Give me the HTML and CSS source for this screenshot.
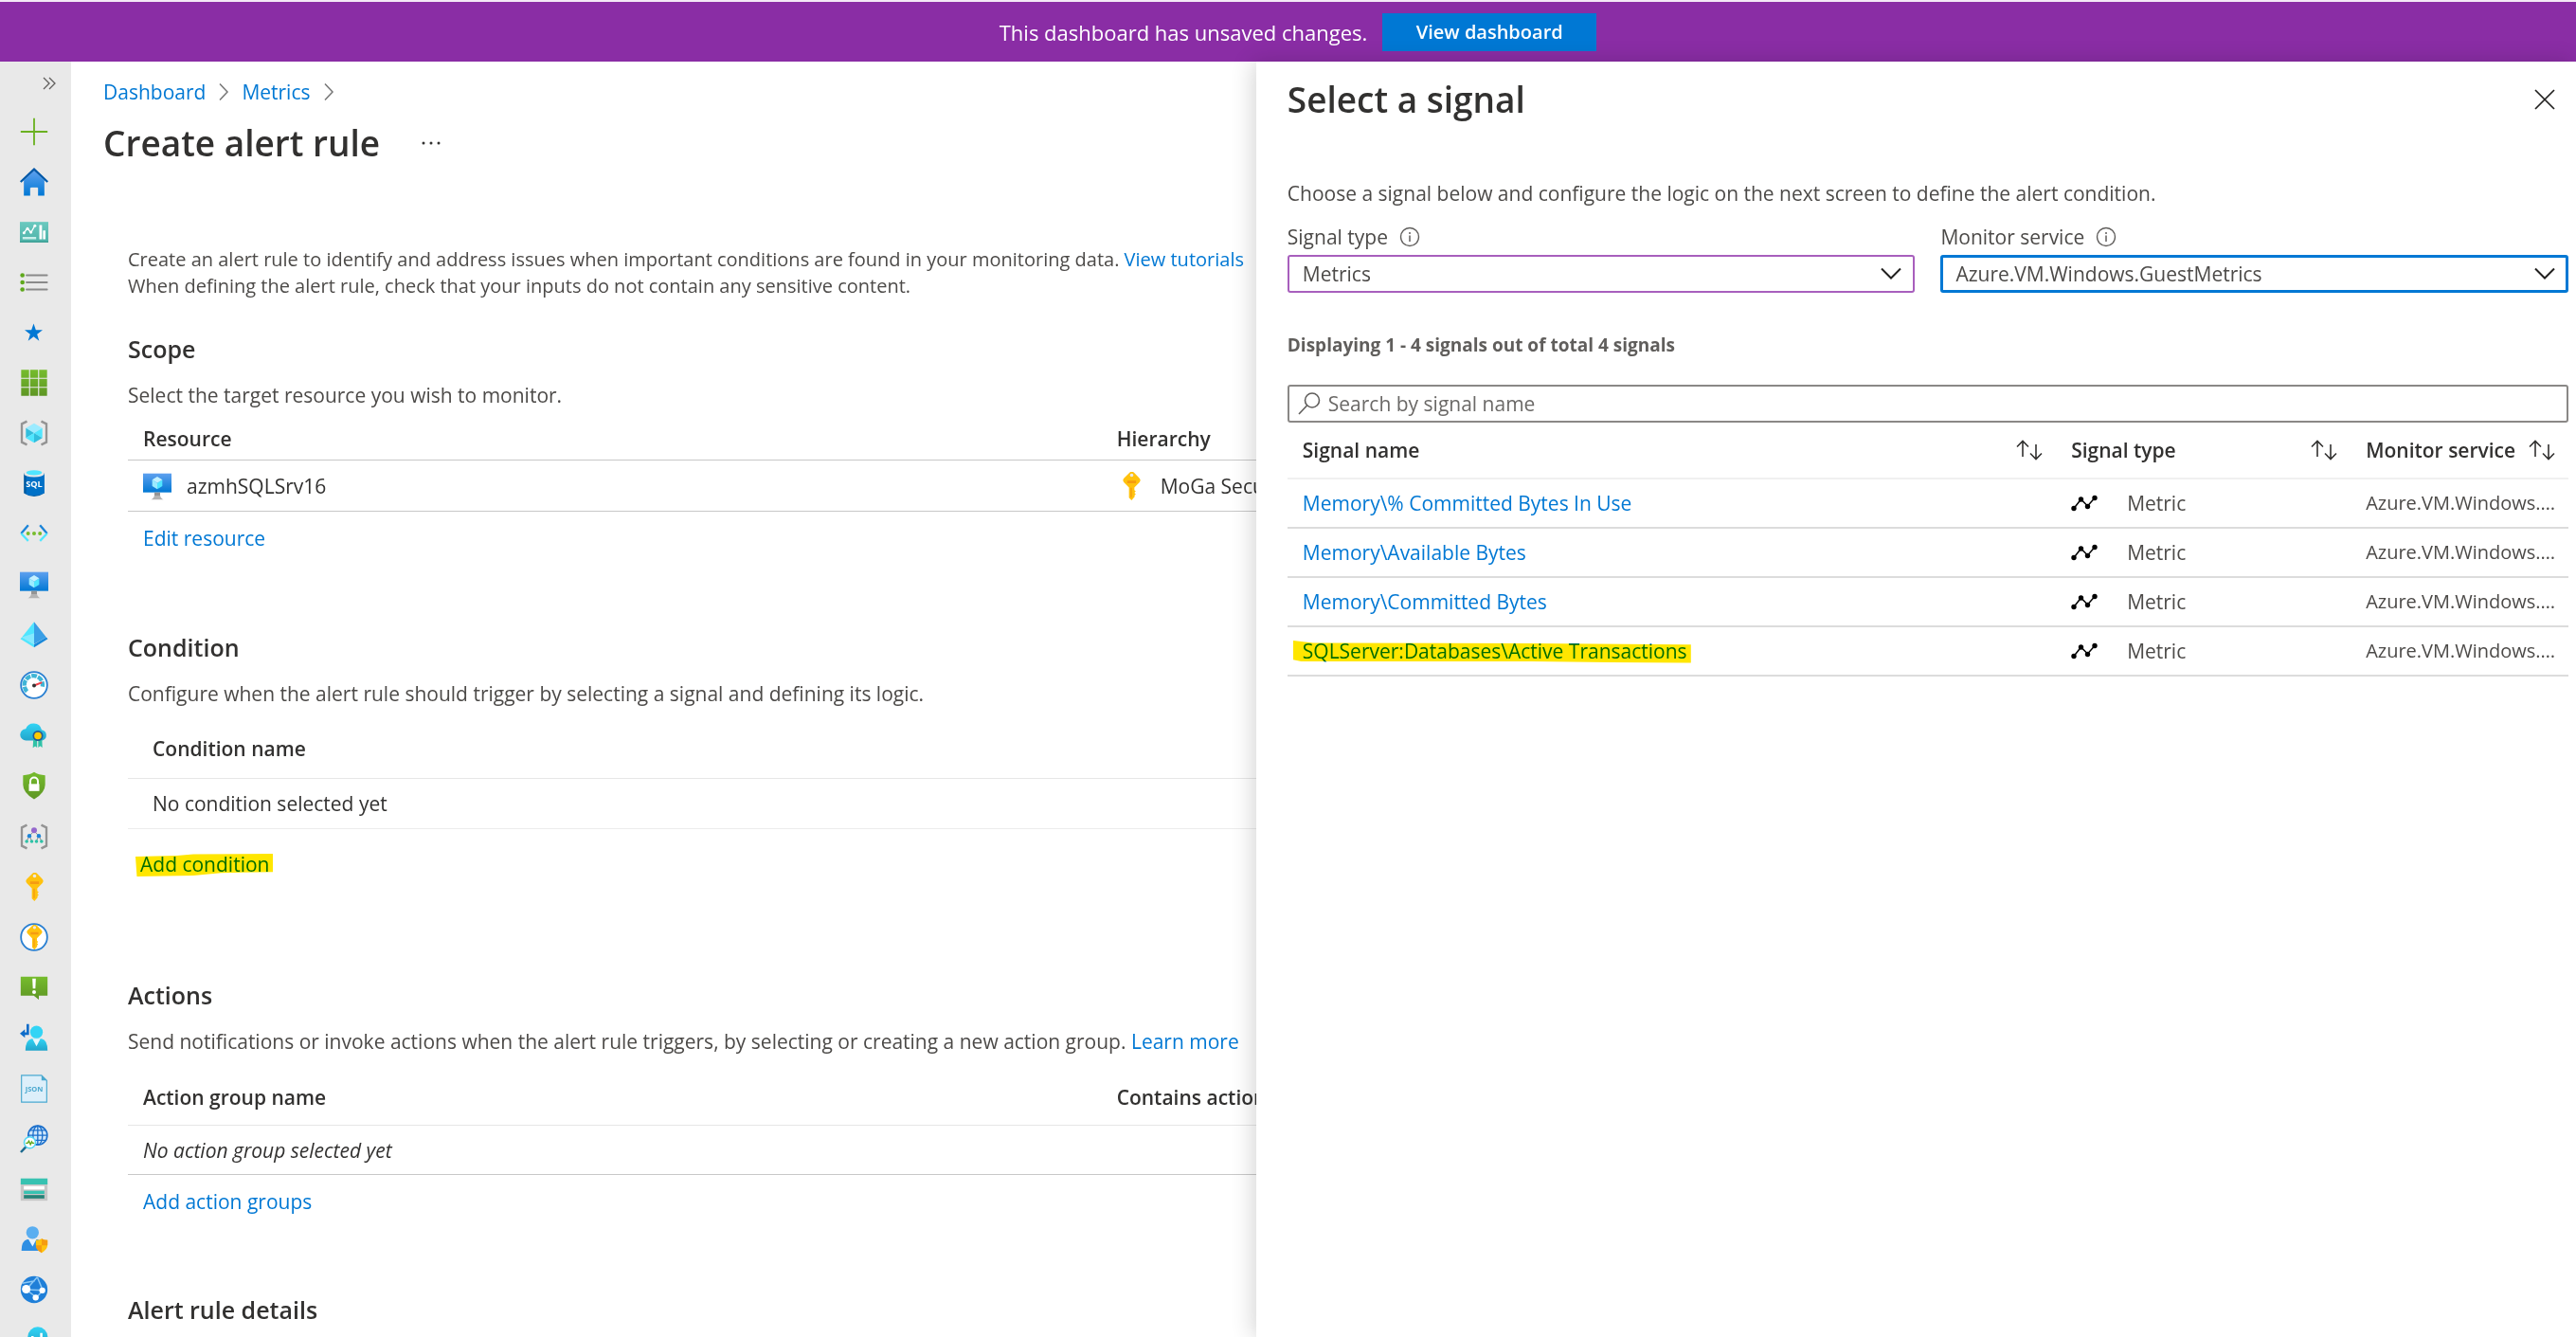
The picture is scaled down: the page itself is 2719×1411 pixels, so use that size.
FILE: index.html
```html
<!DOCTYPE html>
<html lang="en">
<head>
<meta charset="utf-8">
<title>Create alert rule</title>
<link rel="stylesheet" href="styles.css">
</head>
<body>
<svg class="defs" width="0" height="0" aria-hidden="true">
  <defs>
    <linearGradient id="blue" x1="0" y1="0" x2="0" y2="1"><stop offset="0" stop-color="#5ea0ef"/><stop offset="1" stop-color="#0078d4"/></linearGradient>
    <linearGradient id="green" x1="0" y1="0" x2="0" y2="1"><stop offset="0" stop-color="#76bc2d"/><stop offset="1" stop-color="#5e9624"/></linearGradient>
    <linearGradient id="teal" x1="0" y1="0" x2="0" y2="1"><stop offset="0" stop-color="#6bc9bf"/><stop offset="1" stop-color="#4fb3a9"/></linearGradient>
    <linearGradient id="cyan" x1="0" y1="0" x2="0" y2="1"><stop offset="0" stop-color="#32d4f5"/><stop offset="1" stop-color="#22a5cb"/></linearGradient>
    <symbol id="i-vm" viewBox="0 0 18 18">
      <path fill="url(#blue)" d="M0 1h18v12H0z"/>
      <path fill="#50e6ff" d="M12.200 5v4L9 10.900V7z"/><path fill="#c3f1ff" d="M12.200 5 9 7 5.800 5 9 3z"/><path fill="#9cebff" d="M9 7v3.900L5.800 9V5z"/>
      <path fill="#949494" d="M7.200 13h3.600v3H7.200z"/><path fill="#b3b3b3" d="M5 17.500q1.500-.3 2.200-2.500h3.600q.7 2.200 2.200 2.500z"/>
    </symbol>
    <symbol id="i-key" viewBox="0 0 18 18">
      <path fill="#ffc20e" d="M8 .5a2 2 0 0 1 2.800 0l3.300 3.400a2 2 0 0 1 0 2.800L11 9.900v1.600l.9.800-.9.900.9.900-.9.900.3.600L9.200 18 7.600 16.300V9.900L4.500 6.700a2 2 0 0 1 0-2.800z"/>
      <path fill="#e9e9e9" d="M9.300 1a1.100 1.100 0 1 1 0 2.200 1.100 1.100 0 0 1 0-2.200z"/>
      <path fill="#f59b11" d="M6.500 5.500h5.600v1.700H6.500zM8.600 10h.8v6h-.8z"/>
    </symbol>
    <symbol id="i-sort" viewBox="0 0 28 24"><path fill="none" stroke="#323130" stroke-width="1.600" d="M7 19V3M1 8.500 7 2.500l6 6M21 6v15M15 15.500l6 6 6-6"/></symbol>
    <symbol id="i-metric" viewBox="0 0 28 18"><path fill="none" stroke="#000" stroke-width="1.500" d="M3 14.500 10.500 5l7 7L25 3.500"/><g fill="#000"><circle cx="3" cy="14.500" r="2.700"/><circle cx="10.500" cy="5" r="2.700"/><circle cx="17.500" cy="12.500" r="2.700"/><circle cx="25" cy="3.500" r="2.700"/></g></symbol>
    <symbol id="i-info" viewBox="0 0 22 22"><circle cx="11" cy="11" r="9.500" fill="none" stroke="#605e5c" stroke-width="1.400"/><path stroke="#605e5c" stroke-width="1.500" d="M11 9.500V16M11 6v2"/></symbol>
    <symbol id="i-down" viewBox="0 0 22 14"><path fill="none" stroke="#201f1e" stroke-width="2" d="m1 1.500 10 10 10-10"/></symbol>
    <symbol id="i-crumb" viewBox="0 0 12 20"><path fill="none" stroke="#767676" stroke-width="1.500" d="m2 1.500 8 8.500-8 8.500"/></symbol>
  </defs>
</svg>

<div class="app">
  <header class="banner">
    <span>This dashboard has unsaved changes.</span>
    <button class="banner-button" type="button">View dashboard</button>
  </header>

  <div class="shell">
    <nav class="rail" aria-label="Favorites">
      <button class="rail-toggle" type="button" aria-label="Expand menu">
        <svg width="14" height="14" viewBox="0 0 14 14"><path fill="none" stroke="#605e5c" stroke-width="1.300" d="m1 1 6 6-6 6M7 1l6 6-6 6"/></svg>
      </button>
      <ul class="rail-list">
        <li><a href="#" aria-label="Create a resource"><svg viewBox="0 0 18 18"><path stroke="#6bb121" stroke-width="1.100" d="M9 .5v17M.5 9h17"/></svg></a></li>
        <li><a href="#" aria-label="Home"><svg viewBox="0 0 18 18"><path fill="url(#blue)" d="M2.500 8 9 1.800 15.500 8v9.700h-4v-5h-5v5h-4z"/><path fill="#eaeaea" d="M7 12.500h4.200v5H7z"/><path fill="#0058a8" d="M9 0 0 8.500l.9 1L9 2l8.100 7.500.9-1z"/></svg></a></li>
        <li><a href="#" aria-label="Dashboard"><svg viewBox="0 0 18 18"><path fill="url(#teal)" d="M0 2.500h18v13H0z"/><path fill="#3a9c92" d="M0 14.700h18v.8H0z"/><path fill="none" stroke="#fff" stroke-width=".8" d="m2.500 9.500 2.300-3 2.200 2.800 2.500-4.500"/><g fill="#fff"><circle cx="2.600" cy="9.400" r=".9"/><circle cx="4.800" cy="6.700" r=".9"/><circle cx="7" cy="9" r=".9"/><circle cx="9.500" cy="5" r=".9"/><path d="M12.300 4.500H14v9h-1.700zM14.600 8h1.600v5.500h-1.600z"/></g><path fill="#c9efea" d="M1.700 12h8.600v1.500H1.700z"/></svg></a></li>
        <li><a href="#" aria-label="All services"><svg viewBox="0 0 18 18"><path stroke="#8a8a8a" stroke-width="1.100" stroke-linecap="round" d="M4.200 4.500h13M4.200 9h13M4.200 13.500h13"/><g fill="#5fa81c"><circle cx="1.600" cy="4.500" r="1.400"/><circle cx="1.600" cy="9" r="1.400"/><circle cx="1.600" cy="13.500" r="1.400"/></g></svg></a></li>
      </ul>
      <ul class="rail-list">
        <li><a href="#" aria-label="Favorites"><svg viewBox="0 0 18 18"><path fill="#0078d4" d="m8.700 3.300 1.400 4.100h4.300l-3.500 2.600 1.300 4.200-3.500-2.600-3.500 2.600L6.500 10 3 7.400h4.300z"/></svg></a></li>
        <li><a href="#" aria-label="All resources"><svg viewBox="0 0 18 18"><path fill="url(#green)" d="M.8.800h5v5h-5zm5.700 0h5v5h-5zm5.700 0h5v5h-5zM.8 6.500h5v5h-5zm5.700 0h5v5h-5zm5.700 0h5v5h-5zM.8 12.200h5v5h-5zm5.700 0h5v5h-5zm5.700 0h5v5h-5z"/></svg></a></li>
        <li><a href="#" aria-label="Resource groups"><svg viewBox="0 0 18 18"><path fill="none" stroke="#949494" stroke-width="1.400" d="M4.500 1.600 1.200 3.200v11.600l3.300 1.600M13.500 1.600l3.300 1.600v11.600l-3.300 1.600"/><path fill="#9cebff" d="m9 2.800 5.200 3.100L9 9 3.800 5.900z"/><path fill="#32bedd" d="m9 9-5.200 3.100V5.900z"/><path fill="#50e6ff" d="m9 9 5.200-3.100v6.200z"/><path fill="#32bedd" d="m9 9 5.200 3.100L9 15.200z"/><path fill="#50e6ff" d="m9 9-5.200 3.100L9 15.200z"/></svg></a></li>
        <li><a href="#" aria-label="SQL databases"><svg viewBox="0 0 18 18"><path fill="#005ba1" d="M2.500 2.500h13v12.800Q9 19.500 2.500 15.300z"/><path fill="#0078d4" d="M4 3h11.500v12.300Q9 18 4 16z" opacity=".75"/><ellipse cx="9" cy="2.800" rx="6.500" ry="2.300" fill="#e8e8e8"/><ellipse cx="9" cy="2.300" rx="5" ry="1.600" fill="#50e6ff"/><text class="icon-text" x="9" y="11.500" font-size="5.500" fill="#fff" text-anchor="middle">SQL</text></svg></a></li>
        <li><a href="#" aria-label="Virtual networks"><svg viewBox="0 0 18 18"><path fill="none" stroke="#1b84d8" stroke-width="1.400" d="M5.300 3.800.8 9M12.700 3.800 17.200 9"/><path fill="none" stroke="#50e6ff" stroke-width="1.400" d="M.8 9l4.500 4.700M17.200 9l-4.500 4.700"/><g fill="#76bc2d"><circle cx="5.200" cy="9" r="1.200"/><circle cx="9" cy="9" r="1.200"/><circle cx="12.700" cy="9" r="1.200"/></g></svg></a></li>
        <li><a href="#" aria-label="Virtual machines"><svg><use href="#i-vm"/></svg></a></li>
        <li><a href="#" aria-label="Azure Active Directory"><svg viewBox="0 0 18 18"><path fill="#50e6ff" d="m.3 11.500 1-1L9 15v2z"/><path fill="#1988d9" d="m17.700 11.500-1-1L9 15v2z"/><path fill="#50e6ff" d="M9 .8v14L1.300 10.500z"/><path fill="#3a9fe6" d="M9 .8v14l7.700-4.300z"/><path fill="#9cebff" d="M9 8v6.800L1.300 10.500z" opacity=".7"/></svg></a></li>
        <li><a href="#" aria-label="Monitor"><svg viewBox="0 0 18 18"><circle cx="9" cy="9" r="8.300" fill="#fff" stroke="#2a80d2" stroke-width="1.100"/><path fill="none" stroke="#3fb5d6" stroke-width="2.600" stroke-dasharray="3.400 .7" d="M4.500 13a5.800 5.800 0 1 1 9.800-3"/><path stroke="#f04049" stroke-width="1.200" d="M9 9.300 14 7.300"/><circle cx="9" cy="9.300" r="1.200" fill="#333"/></svg></a></li>
        <li><a href="#" aria-label="Advisor"><svg viewBox="0 0 18 18"><path fill="url(#cyan)" d="M4 12.300a3.700 3.700 0 0 1-.3-7.400A5.300 5.300 0 0 1 13.800 5.500a3.500 3.500 0 0 1 .4 6.800z"/><path fill="#2fc2a7" d="M8.500 11.500h2.400v5.300l-1.200-.9-1.500 1zM11.600 11.500H14l.2 5.300-1.400-1-1.200 1z"/><circle cx="11.400" cy="9.300" r="3.300" fill="#245c96"/><circle cx="11.400" cy="9.300" r="2.300" fill="#ffca00"/></svg></a></li>
        <li><a href="#" aria-label="Security Center"><svg viewBox="0 0 18 18"><path fill="url(#green)" d="M9 .5q3 2 7 2v6q0 5-7 9.200Q2 13.500 2 8.500v-6q4 0 7-2z"/><path fill="none" stroke="#fff" stroke-width="1.200" d="M6.600 8.500V6.300a2.400 2.400 0 0 1 4.800 0v2.200"/><path fill="#fff" d="M5.700 8h6.600v4.500H5.700z"/></svg></a></li>
        <li><a href="#" aria-label="Management groups"><svg viewBox="0 0 18 18"><path fill="none" stroke="#949494" stroke-width="1.400" d="M4.500 1.600 1.200 3.200v11.600l3.300 1.600M13.500 1.600l3.300 1.600v11.600l-3.300 1.600"/><path fill="none" stroke="#8a8a8a" stroke-width=".6" d="M9 5.500 6 8.500l-1.700 3.300M6 8.500l1.600 3.300M9 5.500l3 3-1.600 3.300M12 8.500l1.700 3.300"/><circle cx="9" cy="5" r="1.800" fill="#9467cc"/><circle cx="6" cy="8.500" r="1.300" fill="#1b84d8"/><circle cx="12" cy="8.500" r="1.300" fill="#1b84d8"/><g fill="#2fc2a7"><circle cx="4.300" cy="12" r="1.100"/><circle cx="7.500" cy="12" r="1.100"/><circle cx="10.500" cy="12" r="1.100"/><circle cx="13.700" cy="12" r="1.100"/></g></svg></a></li>
        <li><a href="#" aria-label="Keys"><svg><use href="#i-key"/></svg></a></li>
        <li><a href="#" aria-label="Key vaults"><svg viewBox="0 0 18 18"><circle cx="9" cy="9" r="8.300" fill="#fff" stroke="#2a80d2" stroke-width="1.100"/><use href="#i-key" x="1" y="1" width="16" height="16"/></svg></a></li>
        <li><a href="#" aria-label="Alerts"><svg viewBox="0 0 18 18"><path fill="url(#green)" d="M.5 2.300h17v12H12v2.500l-3.200-2.500H.5z"/><path fill="#fff" d="M7.900 3.500h2.200L9.800 9.700H8.200z"/><circle cx="9" cy="12" r="1.200" fill="#fff"/></svg></a></li>
        <li><a href="#" aria-label="Guest users"><svg viewBox="0 0 18 18"><path fill="url(#cyan)" d="M3.500 17.200q0-6.700 4-7.500h6.300q3.700.8 3.700 7.500z"/><path fill="#e9f9fd" d="m8 9.800 2.500 4.700 2.500-4.700z"/><circle cx="10.500" cy="5.500" r="4" fill="#32d4f5"/><path fill="none" stroke="#0f6cc9" stroke-width="1.600" d="M5 .5v6H1.500"/><path fill="#0f6cc9" d="M0 6.500 3.200 3.800v5.400z"/></svg></a></li>
        <li><a href="#" aria-label="Templates"><svg viewBox="0 0 18 18"><path fill="#ddeffa" stroke="#4ba9cf" stroke-width=".7" d="M1 .5h12.700L17 3.800v13.700H1z"/><path fill="#4ba9cf" d="M13.700.5 17 3.800h-3.300z"/><text class="icon-text" x="9" y="11" font-size="4.500" fill="#4ba9cf" text-anchor="middle">JSON</text></svg></a></li>
        <li><a href="#" aria-label="Network watcher"><svg viewBox="0 0 18 18"><circle cx="11.300" cy="6.700" r="6" fill="#cfe6fa" stroke="#1b6fcb" stroke-width="1"/><path fill="none" stroke="#1b6fcb" stroke-width=".8" d="M5.300 6.700h12M11.300.7v12M6.500 3.500h9.600M6.500 9.800h9.600"/><ellipse cx="11.300" cy="6.700" rx="3" ry="6" fill="none" stroke="#1b6fcb" stroke-width=".8"/><path stroke="#1c6a8f" stroke-width="1.500" d="m.6 17.400 3.600-3.800"/><circle cx="6.300" cy="11.300" r="3.600" fill="#fff" stroke="#50d6f5" stroke-width=".9"/><path fill="none" stroke="#5fa81c" stroke-width=".8" d="M3.700 11.600h1.200l.8-1.300 1 2.200.8-1.700.5.800h1.100"/></svg></a></li>
        <li><a href="#" aria-label="Storage accounts"><svg viewBox="0 0 18 18"><path fill="#c6c6c6" d="M.5 5h17v11.300H.5z"/><path fill="#37c2b1" d="M.5 2.200h17V6H.5z"/><path fill="#fff" d="M2.500 7h13v2.200h-13z"/><path fill="#37c2b1" d="M2.500 10h13v2h-13z"/><path fill="#258277" d="M2.500 12.700h13v2.200h-13z"/></svg></a></li>
        <li><a href="#" aria-label="Privileged identity"><svg viewBox="0 0 18 18"><path fill="#2f8fe3" d="M1 16.200q0-6.400 3.700-7.200h6.500q3.800.8 3.800 7.200z"/><path fill="#e6f2fd" d="m5.500 9 2.500 4.500L10.500 9z"/><circle cx="8" cy="4.700" r="4" fill="#5aaef0"/><path fill="#ffc20e" d="M13.800 8.500q1.600 1 3.700 1v3q0 3-3.700 5-3.700-2-3.700-5v-3q2.100 0 3.700-1z"/><path fill="#f59b11" d="M13.800 8.500q1.600 1 3.700 1v3.200h-3.700zM10.100 12.700h3.700v4.800q-3.700-2-3.700-4.800z"/></svg></a></li>
        <li><a href="#" aria-label="App services"><svg viewBox="0 0 18 18"><circle cx="9" cy="9" r="8.500" fill="#1f7fd8"/><path fill="none" stroke="#8cc8f5" stroke-width=".9" d="M4 9 11 1M4 9l6.500 5 4-4.500M4 9 14.500 9.500M14.500 9.500 11 1M1.500 5 9.500 3.500"/><g fill="#fff"><circle cx="4" cy="8.700" r="2.700"/><circle cx="14.200" cy="9.500" r="1.900"/><circle cx="10" cy="14" r="1.900"/></g></svg></a></li>
        <li><a href="#" aria-label="Metrics advisor"><svg viewBox="0 0 18 18"><circle cx="11.300" cy="6.500" r="6.300" fill="url(#cyan)"/><path fill="#fff" d="M7.200 6h1.500v5H7.200zM10 7.500h1.500V11H10zM12.800 4h1.500v7h-1.500z"/></svg></a></li>
      </ul>
    </nav>

    <main class="blade">
      <nav class="crumbs" aria-label="Breadcrumb">
        <a href="#">Dashboard</a>
        <svg class="crumb-sep"><use href="#i-crumb"/></svg>
        <a href="#">Metrics</a>
        <svg class="crumb-sep"><use href="#i-crumb"/></svg>
      </nav>
      <div class="title-row">
        <h1>Create alert rule</h1>
        <button class="more" type="button" aria-label="More"><svg width="20" height="4" viewBox="0 0 20 4"><g fill="#323130"><circle cx="2" cy="2" r="1.500"/><circle cx="10" cy="2" r="1.500"/><circle cx="18" cy="2" r="1.500"/></g></svg></button>
      </div>

      <div class="content">
        <p class="intro">Create an alert rule to identify and address issues when important conditions are found in your monitoring data. <a href="#">View tutorials</a><br>When defining the alert rule, check that your inputs do not contain any sensitive content.</p>

        <section class="scope">
          <h2>Scope</h2>
          <p>Select the target resource you wish to monitor.</p>
          <table class="grid">
            <thead><tr><th class="first">Resource</th><th>Hierarchy</th></tr></thead>
            <tbody><tr>
              <td><span class="with-icon"><svg class="row-icon"><use href="#i-vm"/></svg>azmhSQLSrv16</span></td>
              <td><span class="with-icon"><svg class="row-icon"><use href="#i-key"/></svg>MoGa Security</span></td>
            </tr></tbody>
          </table>
          <a class="action" href="#">Edit resource</a>
        </section>

        <section class="condition">
          <h2>Condition</h2>
          <p>Configure when the alert rule should trigger by selecting a signal and defining its logic.</p>
          <table class="grid">
            <thead><tr><th>Condition name</th></tr></thead>
            <tbody><tr><td>No condition selected yet</td></tr></tbody>
          </table>
          <a class="action marked" href="#">Add condition<svg class="marker" viewBox="0 0 100 100" preserveAspectRatio="none"><path fill="#ffe600" d="M0 12 30 8 42 2 100 0V80L62 84 42 96 1 100z"/></svg></a>
        </section>

        <section class="actions">
          <h2>Actions</h2>
          <p>Send notifications or invoke actions when the alert rule triggers, by selecting or creating a new action group. <a href="#">Learn more</a></p>
          <table class="grid">
            <thead><tr><th class="first">Action group name</th><th>Contains actions</th></tr></thead>
            <tbody><tr><td colspan="2"><em>No action group selected yet</em></td></tr></tbody>
          </table>
          <a class="action" href="#">Add action groups</a>
        </section>

        <section class="details">
          <h2>Alert rule details</h2>
        </section>
      </div>
    </main>

    <aside class="panel" aria-label="Select a signal">
      <div class="panel-head">
        <h1>Select a signal</h1>
        <button class="close" type="button" aria-label="Close"><svg width="22" height="22" viewBox="0 0 22 22"><path stroke="#201f1e" stroke-width="1.700" d="m1 1 20 20M21 1 1 21"/></svg></button>
      </div>
      <p>Choose a signal below and configure the logic on the next screen to define the alert condition.</p>
      <div class="fields">
        <div class="field">
          <label for="signal-type">Signal type <svg class="info"><use href="#i-info"/></svg></label>
          <div class="select-box"><select id="signal-type"><option>Metrics</option></select><svg class="down"><use href="#i-down"/></svg></div>
        </div>
        <div class="field">
          <label for="monitor-service">Monitor service <svg class="info"><use href="#i-info"/></svg></label>
          <div class="select-box active"><select id="monitor-service"><option>Azure.VM.Windows.GuestMetrics</option></select><svg class="down"><use href="#i-down"/></svg></div>
        </div>
      </div>
      <p class="count">Displaying 1 - 4 signals out of total 4 signals</p>
      <div class="search">
        <svg width="24" height="24" viewBox="0 0 24 24"><g fill="none" stroke="#605e5c" stroke-width="1.600"><circle cx="15" cy="8.500" r="7.500"/><path d="M9.500 14 1 23"/></g></svg>
        <input type="text" aria-label="Search by signal name" placeholder="Search by signal name">
      </div>
      <table class="signals">
        <colgroup><col class="c-name"><col class="c-type"><col class="c-service"></colgroup>
        <thead><tr>
          <th><span class="sortable">Signal name<svg class="sort"><use href="#i-sort"/></svg></span></th>
          <th><span class="sortable">Signal type<svg class="sort"><use href="#i-sort"/></svg></span></th>
          <th><span class="sortable">Monitor service<svg class="sort"><use href="#i-sort"/></svg></span></th>
        </tr></thead>
        <tbody>
          <tr><td><a href="#">Memory\% Committed Bytes In Use</a></td><td><span class="metric"><svg><use href="#i-metric"/></svg>Metric</span></td><td class="service">Azure.VM.Windows.GuestMetrics</td></tr>
          <tr><td><a href="#">Memory\Available Bytes</a></td><td><span class="metric"><svg><use href="#i-metric"/></svg>Metric</span></td><td class="service">Azure.VM.Windows.GuestMetrics</td></tr>
          <tr><td><a href="#">Memory\Committed Bytes</a></td><td><span class="metric"><svg><use href="#i-metric"/></svg>Metric</span></td><td class="service">Azure.VM.Windows.GuestMetrics</td></tr>
          <tr><td><a class="marked wide" href="#">SQLServer:Databases\Active Transactions<svg class="marker" viewBox="0 0 100 100" preserveAspectRatio="none"><path fill="#ffe600" d="M0 0 5 10 60 12 100 18V98L80 96 60 92 2 92 0 84z"/></svg></a></td><td><span class="metric"><svg><use href="#i-metric"/></svg>Metric</span></td><td class="service">Azure.VM.Windows.GuestMetrics</td></tr>
        </tbody>
      </table>
    </aside>
  </div>
</div>
</body>
</html>
```
FILE: styles.css
```css
* { box-sizing: border-box; }

body {
  margin: 0;
  background: #fff;
  color: #4c4a48;
  font: 21px/28px "Open Sans", "Noto Sans", sans-serif;
}

h1, h2, p, ul { margin: 0; padding: 0; }
a { color: #0078d4; text-decoration: none; }
button { font: inherit; border: 0; background: none; padding: 0; }
svg { display: block; flex: none; }
.defs { position: absolute; }
.icon-text { font-family: "Open Sans", sans-serif; font-weight: 700; }

h1 { color: #323130; font-size: 37px; font-weight: 600; line-height: 52px; }
h2 { color: #323130; font-size: 25px; font-weight: 600; line-height: 32px; margin-bottom: 19px; }

.app { display: flex; flex-direction: column; height: 100vh; overflow: hidden; }

/* Banner */
.banner {
  flex: none;
  display: flex;
  align-items: center;
  justify-content: center;
  gap: 16px;
  height: 65px;
  padding-left: 21px;
  border-top: 2px solid #f3e8f6;
  background: #8a2da5;
  color: #fff;
  font-size: 22px;
}
.banner-button {
  width: 226px;
  height: 40px;
  background: #0078d4;
  color: #fff;
  font-size: 20px;
  font-weight: 600;
}

.shell { flex: 1; min-height: 0; display: flex; }

/* Icon rail */
.rail { flex: none; width: 75px; background: #e9e9e9; overflow: hidden; }
.rail-toggle { display: flex; justify-content: flex-end; width: 59px; height: 47px; padding-top: 16px; }
.rail-list { list-style: none; }
.rail-list li:nth-child(5n) { padding-bottom: 1px; }
.rail-list a { display: flex; align-items: center; height: 53px; padding-left: 21px; }
.rail-list svg { width: 30px; height: 30px; }

/* Main blade */
.blade { flex: 1; min-width: 0; overflow: hidden; padding: 16px 0 0 34px; white-space: nowrap; }
.crumbs { display: flex; align-items: center; gap: 13px; line-height: 32px; }
.crumb-sep { width: 12px; height: 20px; }
.title-row { display: flex; align-items: center; gap: 44px; margin-top: 12px; }
.content { padding: 83px 0 0 26px; }
.intro { margin-bottom: 36px; font-size: 20px; }

.grid { width: 100%; table-layout: fixed; border-collapse: separate; border-spacing: 0; color: #323130; }
.grid th { padding: 0 16px; border-bottom: 1px solid #e6e6e6; text-align: left; font-weight: 600; }
.grid td { height: 52px; padding: 0 16px; border-bottom: 1px solid #c8c8c8; }
.grid .first { width: 86.3%; }
.with-icon { display: flex; align-items: center; gap: 16px; }
.row-icon { width: 30px; height: 30px; }
.action { display: inline-block; margin: 14px 0 0 16px; }

.scope { margin-bottom: 85px; }
.scope .grid { margin-top: 10px; }
.scope th { height: 45px; border-color: #c8c8c8; }
.scope td { height: 54px; }

.condition { margin-bottom: 108px; }
.condition .grid { margin-top: 12px; }
.condition th { height: 64px; padding: 0 26px; }
.condition td { height: 53px; padding: 0 26px; border-color: #ececec; }
.condition .action { margin: 23px 0 0 13px; }

.actions { margin-bottom: 84px; }
.actions .grid { margin-top: 16px; }
.actions th { height: 59px; }

/* Highlighter strokes over links */
.marked { position: relative; }
.marker {
  position: absolute;
  left: -5px;
  top: 3px;
  width: calc(100% + 9px);
  height: 24px;
  mix-blend-mode: multiply;
}
.marked.wide .marker { left: -10px; width: calc(100% + 14px); }

/* Signal panel */
.panel {
  position: relative;
  flex: none;
  width: 51.24%;
  padding: 14px 8px 0 33px;
  background: #fff;
  box-shadow: -4px 0 22px rgba(0, 0, 0, .16);
}
.panel-head { display: flex; align-items: center; justify-content: space-between; padding-right: 14px; margin-bottom: 59px; }
.fields { display: grid; grid-template-columns: 1fr 1fr; gap: 27px; margin: 16px 0 41px; }
.field label { display: flex; align-items: center; gap: 12px; height: 31px; margin-bottom: 4px; }
.info { width: 22px; height: 22px; }
.select-box { position: relative; height: 40px; }
.select-box select {
  appearance: none;
  width: 100%;
  height: 100%;
  padding: 0 48px 0 14px;
  border: 2px solid #a85fbd;
  border-radius: 3px;
  background: #fff;
  color: inherit;
  font: inherit;
}
.select-box.active select { border: 3px solid #0078d4; padding-left: 13px; }
.down { position: absolute; right: 14px; top: 13px; width: 22px; height: 14px; pointer-events: none; }

.count { color: #605e5c; font-size: 19px; font-weight: 700; margin-bottom: 28px; }
.search {
  display: flex;
  align-items: center;
  gap: 8px;
  height: 40px;
  padding: 0 9px;
  border: 2px solid #8a8886;
  border-radius: 3px;
}
.search input { flex: 1; min-width: 0; border: 0; outline: 0; padding: 0; background: none; color: #323130; font: inherit; }
.search input::placeholder { color: #6b6967; opacity: 1; }

.signals { width: 100%; table-layout: fixed; border-collapse: separate; border-spacing: 0; }
.c-name { width: 60%; }
.c-type { width: 23%; }
.c-service { width: 17%; }
.signals th { height: 60px; padding: 0 14px 0 16px; border-bottom: 2px solid #f0f0f0; color: #323130; font-weight: 600; text-align: left; white-space: nowrap; }
.signals td { height: 52px; padding: 0 8px 0 16px; border-bottom: 2px solid #dcdcdc; white-space: nowrap; }
.sortable { display: flex; align-items: center; justify-content: space-between; }
.sort { width: 28px; height: 24px; }
.metric { display: flex; align-items: center; gap: 31px; }
.metric svg { width: 28px; height: 18px; }
.signals .service { overflow: hidden; padding-right: 6px; font-size: 20px; text-overflow: ellipsis; }
```
